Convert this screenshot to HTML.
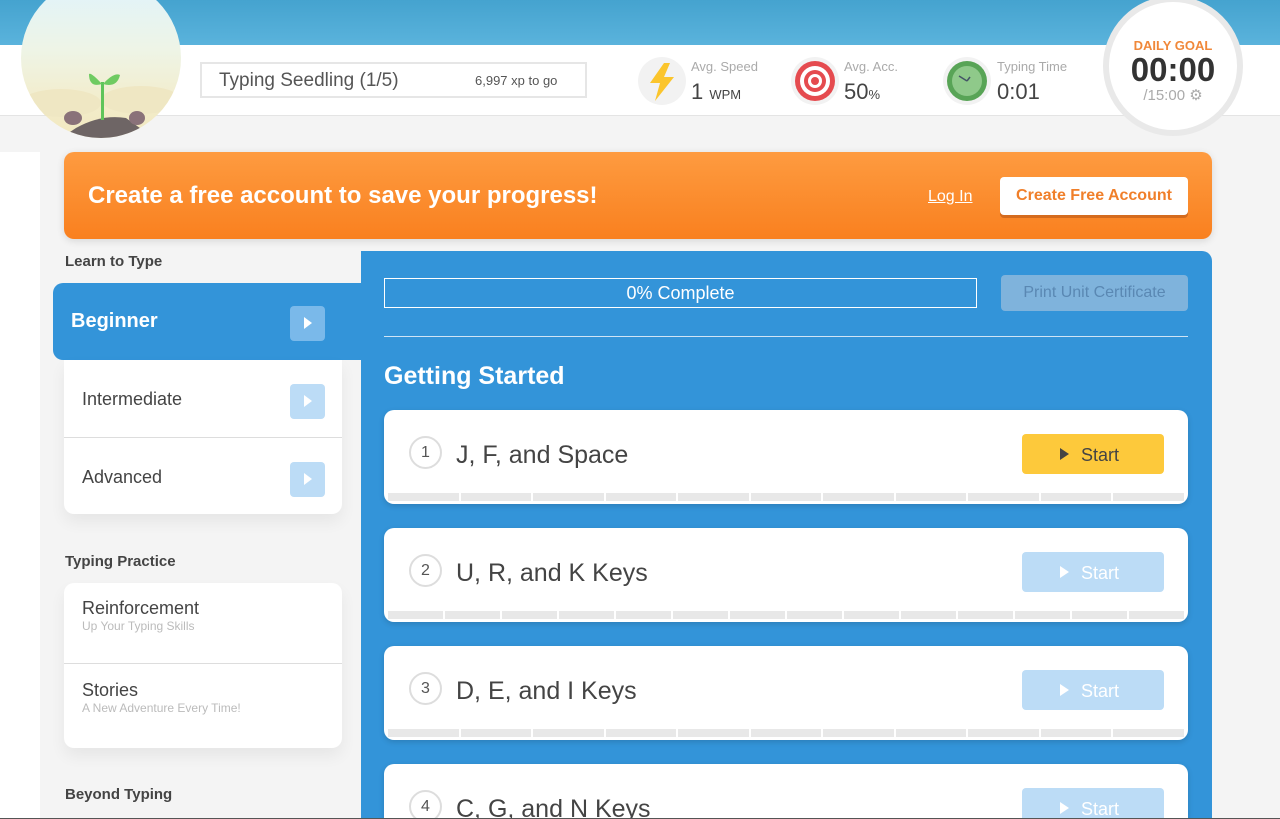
<!DOCTYPE html>
<html style="overflow:hidden;width:1280px;height:819px"><head><meta charset="utf-8"><style>
*{box-sizing:border-box;margin:0;padding:0}
body{width:1280px;height:819px;overflow:hidden;background:#f4f4f4;font-family:"Liberation Sans",sans-serif;position:relative;color:#444}
.abs{position:absolute}
.top{left:0;top:0;width:1280px;height:45px;background:linear-gradient(#45a3cf,#5ab3dc)}
.hdr{left:0;top:45px;width:1280px;height:71px;background:#fff;border-bottom:1px solid #e4e4e4}
.avatar{left:21px;top:-22px;width:160px;height:160px;border-radius:50%;overflow:hidden;background:linear-gradient(#dff3fd 0%,#eef4e6 45%,#f3ecc9 80%,#f1e8c0 100%)}
.lvl{left:200px;top:62px;width:387px;height:36px;border:2px solid #e6e6e6;background:#fff}
.lbl{font-size:13px;color:#aaa}
.val{font-size:22px;color:#444}
.ic{width:48px;height:48px;border-radius:50%;background:#f2f2f2}
.goal{left:1103px;top:-4px;width:140px;height:140px;border-radius:50%;background:#fff;border:6px solid #e9e9e9;text-align:center}
.strip{left:0;top:152px;width:40px;height:667px;background:#fff}
.banner{left:64px;top:152px;width:1148px;height:87px;border-radius:10px;background:linear-gradient(#fe9b40,#f9801f);box-shadow:0 2px 8px rgba(0,0,0,.12)}
.blue{left:361px;top:251px;width:851px;height:570px;background:#3394d9;border-radius:0 10px 0 0}
.beg{left:53px;top:283px;width:308px;height:77px;background:#3394d9;border-radius:10px 0 0 10px}
.sq{width:35px;height:35px;border-radius:4px;background:#bcdcf6}
.sq:after{content:"";position:absolute;left:14px;top:11px;border-left:8px solid #fff;border-top:6px solid transparent;border-bottom:6px solid transparent}
.menu{left:64px;width:278px;background:#fff;border-radius:0 0 10px 10px;box-shadow:0 8px 16px rgba(0,0,0,.06)}
.mi{position:relative;height:77px;font-size:18px;color:#444;padding-left:18px;line-height:79px}
.sec{font-size:15px;font-weight:bold;color:#444}
.card{left:384px;width:804px;height:94px;background:#fff;border-radius:10px;overflow:hidden;box-shadow:0 2px 6px rgba(0,0,0,.15)}
.num{position:absolute;left:25px;top:26px;width:33px;height:33px;border-radius:50%;border:2px solid #ddd;text-align:center;line-height:29px;font-size:16px;color:#555}
.ttl{position:absolute;left:72px;top:31px;font-size:25px;color:#444}
.st{position:absolute;left:638px;top:24px;width:142px;height:40px;border-radius:4px;background:#bcdcf6;color:#fff;font-size:18px;line-height:42px;padding-left:59px}
.st:before{content:"";position:absolute;left:38px;top:14px;border-left:9px solid #fff;border-top:6px solid transparent;border-bottom:6px solid transparent}
.st.y{background:#fdc93b;color:#444}
.st.y:before{border-left-color:#444}
.bar{position:absolute;left:4px;right:4px;bottom:3px;height:8px;display:flex;gap:2px}
.bar i{flex:1;background:#e8e8e8}
</style></head><body>
<div class="abs top"></div>
<div class="abs hdr"></div>
<div class="abs avatar">
<svg width="160" height="160" viewBox="0 0 160 160"><ellipse cx="40" cy="125" rx="40" ry="14" fill="#efe7c3"/><ellipse cx="120" cy="122" rx="40" ry="14" fill="#efe7c3"/><path d="M40 160 L55 150 Q80 136 105 140 L130 158 L130 160Z" fill="#6e6565"/><ellipse cx="52" cy="140" rx="9" ry="7" fill="#8a7279"/><ellipse cx="116" cy="140" rx="8" ry="7" fill="#8a7279"/><rect x="80" y="104" width="3" height="38" fill="#5fc45a"/><path d="M81 106 Q70 94 68 96 Q68 110 81 106Z" fill="#6fcb62"/><path d="M82 106 Q93 94 99 97 Q96 110 82 106Z" fill="#6fcb62"/></svg></div>
<div class="abs lvl"><span class="abs" style="left:17px;top:6px;font-size:19px;color:#555">Typing Seedling (1/5)</span><span class="abs" style="left:273px;top:9px;font-size:13px;color:#555">6,997 xp to go</span></div>

<div class="abs ic" style="left:638px;top:57px"><svg width="48" height="48"><path d="M26 6 L12 26 H22 L17 44 L36 20 H26 L32 6Z" fill="#fbc52c"/></svg></div>
<div class="abs lbl" style="left:691px;top:59px">Avg. Speed</div>
<div class="abs val" style="left:691px;top:79px">1 <span style="font-size:13px">WPM</span></div>
<div class="abs ic" style="left:791px;top:57px"><svg width="48" height="48"><circle cx="24" cy="24" r="20" fill="#e54b4f"/><circle cx="24" cy="24" r="15" fill="#fff"/><circle cx="24" cy="24" r="11" fill="#e54b4f"/><circle cx="24" cy="24" r="7" fill="#fff"/><circle cx="24" cy="24" r="4" fill="#e54b4f"/></svg></div>
<div class="abs lbl" style="left:844px;top:59px">Avg. Acc.</div>
<div class="abs val" style="left:844px;top:79px">50<span style="font-size:13px">%</span></div>
<div class="abs ic" style="left:943px;top:57px"><svg width="48" height="48"><circle cx="24" cy="24" r="20" fill="#58a456"/><circle cx="24" cy="24" r="15" fill="#8fc98a"/><path d="M24 24 L16 19 M24 24 L27 20" stroke="#456" stroke-width="1.5"/></svg></div>
<div class="abs lbl" style="left:997px;top:59px">Typing Time</div>
<div class="abs val" style="left:997px;top:79px">0:01</div>

<div class="abs goal"><div style="margin-top:36px;font-size:13px;font-weight:bold;color:#f0883a">DAILY GOAL</div><div style="font-size:33px;font-weight:bold;color:#333;line-height:33px">00:00</div><div style="font-size:15px;color:#aaa">/15:00 ⚙</div></div>

<div class="abs strip"></div>
<div class="abs banner"><span class="abs" style="left:24px;top:30px;font-size:24px;font-weight:bold;color:#fff">Create a free account to save your progress!</span><span class="abs" style="left:864px;top:36px;font-size:16px;color:#fff;text-decoration:underline">Log In</span><span class="abs" style="left:936px;top:25px;width:188px;height:38px;background:#fff;border-radius:4px;box-shadow:0 3px 0 #d46b1e;color:#f07f2a;font-size:16px;font-weight:bold;text-align:center;line-height:38px">Create Free Account</span></div>

<div class="abs sec" style="left:65px;top:253px">Learn to Type</div>
<div class="abs blue"></div>
<div class="abs beg"><span class="abs" style="left:18px;top:27px;font-size:20px;font-weight:bold;color:#fff">Beginner</span><div class="abs sq" style="left:237px;top:23px;background:#7ab9ea"></div></div>
<div class="abs menu" style="top:360px"><div class="mi">Intermediate<div class="abs sq" style="left:226px;top:24px"></div></div><div class="mi" style="border-top:1px solid #ddd">Advanced<div class="abs sq" style="left:226px;top:24px"></div></div></div>

<div class="abs sec" style="left:65px;top:553px">Typing Practice</div>
<div class="abs menu" style="top:583px;height:165px;border-radius:10px"><div style="height:81px;padding:15px 18px;border-bottom:1px solid #ddd"><div style="font-size:18px">Reinforcement</div><div style="font-size:12px;color:#bbb">Up Your Typing Skills</div></div><div style="padding:16px 18px"><div style="font-size:18px">Stories</div><div style="font-size:12px;color:#bbb">A New Adventure Every Time!</div></div></div>
<div class="abs sec" style="left:65px;top:786px">Beyond Typing</div>

<div class="abs" style="left:384px;top:278px;width:593px;height:30px;border:1px solid #fff;color:#fff;font-size:18px;text-align:center;line-height:28px">0% Complete</div>
<div class="abs" style="left:1001px;top:275px;width:187px;height:36px;background:#7fb3dc;border-radius:4px;color:#5a88b3;font-size:16px;text-align:center;line-height:36px">Print Unit Certificate</div>
<div class="abs" style="left:384px;top:336px;width:804px;height:1px;background:#cfe4f6"></div>
<div class="abs" style="left:384px;top:362px;font-size:25px;font-weight:bold;color:#fff">Getting Started</div>

<div class="abs card" style="top:410px"><div class="num">1</div><div class="ttl">J, F, and Space</div><div class="st y">Start</div><div class="bar"><i></i><i></i><i></i><i></i><i></i><i></i><i></i><i></i><i></i><i></i><i></i></div></div>
<div class="abs card" style="top:528px"><div class="num">2</div><div class="ttl">U, R, and K Keys</div><div class="st">Start</div><div class="bar"><i></i><i></i><i></i><i></i><i></i><i></i><i></i><i></i><i></i><i></i><i></i><i></i><i></i><i></i></div></div>
<div class="abs card" style="top:646px"><div class="num">3</div><div class="ttl">D, E, and I Keys</div><div class="st">Start</div><div class="bar"><i></i><i></i><i></i><i></i><i></i><i></i><i></i><i></i><i></i><i></i><i></i></div></div>
<div class="abs card" style="top:764px;height:55px;border-radius:10px 10px 0 0"><div class="num">4</div><div class="ttl">C, G, and N Keys</div><div class="st">Start</div></div>
<div class="abs" style="left:0;top:818px;width:1280px;height:1px;background:#555"></div>
</body></html>
